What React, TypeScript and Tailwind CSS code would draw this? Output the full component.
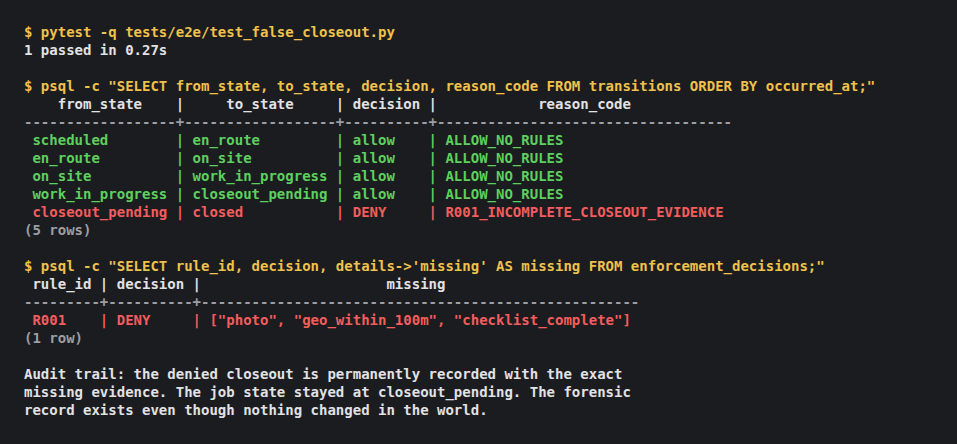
import React from "react";

type Line = { text: string; color?: string };

const Y = "text-[#f0c14b]";
const G = "text-[#5dd05d]";
const R = "text-[#f45d5d]";
const W = "text-[#e2e2e4]";
const D = "text-[#9d9ea3]";

const lines: Line[] = [
  { text: "$ pytest -q tests/e2e/test_false_closeout.py", color: Y },
  { text: "1 passed in 0.27s", color: W },
  { text: "" },
  {
    text: '$ psql -c "SELECT from_state, to_state, decision, reason_code FROM transitions ORDER BY occurred_at;"',
    color: Y,
  },
  { text: "    from_state    |     to_state     | decision |            reason_code", color: W },
  {
    text: "------------------+------------------+----------+-----------------------------------",
    color: D,
  },
  { text: " scheduled        | en_route         | allow    | ALLOW_NO_RULES", color: G },
  { text: " en_route         | on_site          | allow    | ALLOW_NO_RULES", color: G },
  { text: " on_site          | work_in_progress | allow    | ALLOW_NO_RULES", color: G },
  { text: " work_in_progress | closeout_pending | allow    | ALLOW_NO_RULES", color: G },
  { text: " closeout_pending | closed           | DENY     | R001_INCOMPLETE_CLOSEOUT_EVIDENCE", color: R },
  { text: "(5 rows)", color: D },
  { text: "" },
  {
    text: "$ psql -c \"SELECT rule_id, decision, details->'missing' AS missing FROM enforcement_decisions;\"",
    color: Y,
  },
  { text: " rule_id | decision |" + " ".repeat(22) + "missing", color: W },
  {
    text: "---------+----------+----------------------------------------------------",
    color: D,
  },
  { text: ' R001    | DENY     | ["photo", "geo_within_100m", "checklist_complete"]', color: R },
  { text: "(1 row)", color: D },
  { text: "" },
  { text: "Audit trail: the denied closeout is permanently recorded with the exact", color: W },
  { text: "missing evidence. The job state stayed at closeout_pending. The forensic", color: W },
  { text: "record exists even though nothing changed in the world.", color: W },
];

export default function App() {
  return (
    <div className="h-[444px] w-[957px] overflow-hidden bg-[#1b1c20] px-6 pt-[23px]">
      <pre className="font-['DejaVu_Sans_Mono',monospace] text-[14px] font-bold leading-[18px]">
        {lines.map((line, i) => (
          <div key={i} className={`h-[18px] whitespace-pre ${line.color ?? W}`}>
            {line.text}
          </div>
        ))}
      </pre>
    </div>
  );
}
